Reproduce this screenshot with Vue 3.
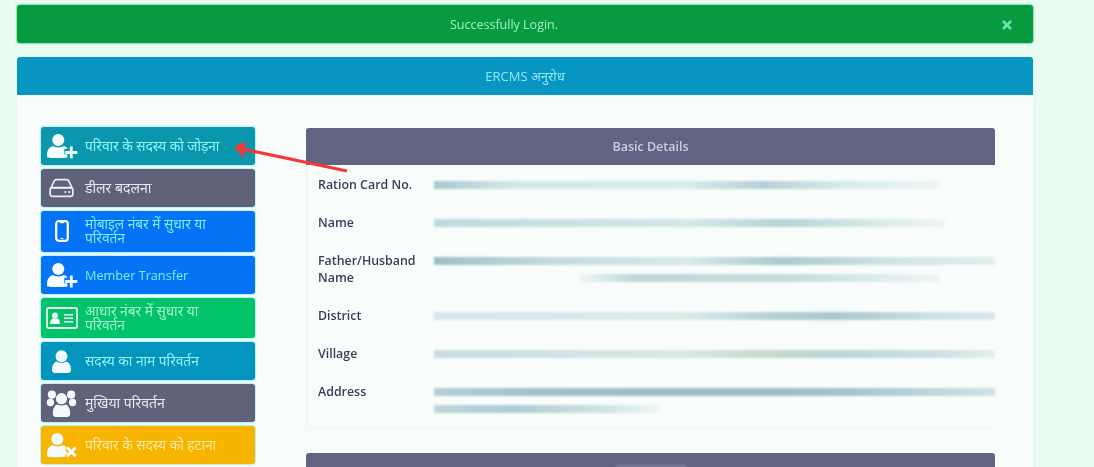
<script setup>
const actions = [
  { label: 'परिवार के सदस्य को जोड़ना', icon: 'userPlus', tone: 'teal', tall: false },
  { label: 'डीलर बदलना', icon: 'drive', tone: 'slate', tall: false, large: true },
  { label: 'मोबाइल नंबर में सुधार या परिवर्तन', icon: 'mobile', tone: 'blue', tall: true },
  { label: 'Member Transfer', icon: 'userPlus', tone: 'blue', tall: false, latin: true },
  { label: 'आधार नंबर में सुधार या परिवर्तन', icon: 'card', tone: 'green', tall: true },
  { label: 'सदस्य का नाम परिवर्तन', icon: 'user', tone: 'sky', tall: false },
  { label: 'मुखिया परिवर्तन', icon: 'users', tone: 'slate', tall: false, large: true },
  { label: 'परिवार के सदस्य को हटाना', icon: 'userX', tone: 'amber', tall: false }
]

const rows = [
  { label: 'Ration Card No.', bars: ['b1'], kind: 'single' },
  { label: 'Name', bars: ['b2'], kind: 'single' },
  { label: 'Father/Husband Name', bars: ['b3', 'b4'], kind: 'double' },
  { label: 'District', bars: ['b5'], kind: 'single' },
  { label: 'Village', bars: ['b6'], kind: 'single' },
  { label: 'Address', bars: ['b7', 'b8'], kind: 'double' }
]
</script>

<template>
  <div class="page">
    <div class="alert">
      <span class="soft">Successfully Login.</span>
      <svg class="close" viewBox="0 0 12 12" aria-hidden="true">
        <path d="M2 2 10 10M10 2 2 10" />
      </svg>
    </div>

    <section class="card">
      <header class="card-head"><span class="soft">ERCMS अनुरोध</span></header>
      <div class="card-body">
        <nav class="actions">
          <a
            v-for="item in actions"
            :key="item.label + item.tone"
            class="action"
            :class="[item.tone, { tall: item.tall, large: item.large, latin: item.latin }]"
          >
            <span class="icon">
              <svg v-if="item.icon === 'userPlus'" viewBox="0 0 34 28" class="ic-wide">
                <circle cx="13" cy="7.500" r="6.500" />
                <path d="M1 26c-1-8 3-11 6-12 3 2 9 2 12 0 2 .6 3.400 1.600 4.300 3h-3.800v6h3.300v3.400C20 27 3 27.500 1 26z" />
                <path d="M25.500 14.500h3v5h5v3h-5v5h-3v-5h-5v-3h5z" />
              </svg>
              <svg v-else-if="item.icon === 'userX'" viewBox="0 0 34 28" class="ic-wide">
                <circle cx="12" cy="7.500" r="6.500" />
                <path d="M1 26c-1-8 3-11 6-12 3 2 8 2 11 0 1.500.5 3 1.500 4 3l-2 2 3 3-3 3 1.500 1.400C17 27.500 3 27.500 1 26z" />
                <path d="m23.500 15.500 3.500 3.500 3.500-3.500 2.300 2.300-3.500 3.500 3.500 3.500-2.300 2.400-3.500-3.500-3.500 3.500-2.300-2.400 3.500-3.500-3.500-3.500z" />
              </svg>
              <svg v-else-if="item.icon === 'drive'" viewBox="0 0 26 20" class="ic-drive">
                <path class="line" d="M2 10 5.500 2.500C6 1.600 6.800 1.200 7.800 1.200h10.400c1 0 1.800.4 2.300 1.300L24 10" />
                <rect class="line" x="1.200" y="9.500" width="23.600" height="9.300" rx="2.500" />
                <path d="M3 9h20v1.500H3z" />
                <circle cx="17" cy="14.200" r="1.100" />
                <circle cx="21" cy="14.200" r="1.100" />
              </svg>
              <svg v-else-if="item.icon === 'mobile'" viewBox="0 0 14 22" class="ic-mobile">
                <rect class="line thick" x="1.200" y="1.200" width="11.600" height="19.600" rx="2.500" />
                <path d="M5 2h4v1.200H5z" />
                <path d="M5.500 18h3v1h-3z" />
              </svg>
              <svg v-else-if="item.icon === 'card'" viewBox="0 0 32 22" class="ic-card">
                <rect class="line" x="1" y="1" width="30" height="20" rx="1.500" />
                <circle cx="9" cy="8.500" r="3" />
                <path d="M4 17c0-4 2-5.500 3-5.500h4c1.300 0 3 1.500 3 5.500z" />
                <path d="M18 7h9v1.500h-9zM18 10.500h9V12h-9zM18 14h9v1.500h-9z" />
              </svg>
              <svg v-else-if="item.icon === 'user'" viewBox="0 0 22 24" class="ic-user">
                <circle cx="11" cy="6.500" r="6.200" />
                <path d="M1 21c0-6 3-8.500 5-9 3 2 7 2 10 0 2 .5 5 3 5 9 0 1.800-1.500 3-3 3H4c-1.500 0-3-1.200-3-3z" />
              </svg>
              <svg v-else viewBox="0 0 32 28" class="ic-users">
                <circle cx="16" cy="9" r="5.800" />
                <circle cx="6" cy="4.800" r="4.200" />
                <circle cx="26" cy="4.800" r="4.200" />
                <circle cx="4.500" cy="13" r="3.800" />
                <circle cx="27.500" cy="13" r="3.800" />
                <path d="M7 25c0-6 2-9 4.500-10 3 1.500 6 1.500 9 0C23 16 25 19 25 25c0 2-1.500 3-3 3H10c-1.500 0-3-1-3-3z" />
              </svg>
            </span>
            <span class="action-text">{{ item.label }}</span>
          </a>
        </nav>

        <div class="panels">
          <div class="panel">
            <h3 class="panel-head"><span class="soft">Basic Details</span></h3>
            <div class="panel-rows">
              <div v-for="row in rows" :key="row.label" class="row" :class="row.kind">
                <div class="row-label">{{ row.label }}</div>
                <div class="row-values">
                  <span v-for="b in row.bars" :key="b" class="bar" :class="b"></span>
                </div>
              </div>
            </div>
          </div>
          <div class="panel-next"><span class="next-title"></span></div>
        </div>
      </div>
    </section>

    <svg class="pointer" viewBox="0 0 1094 467" aria-hidden="true">
      <path d="M347 171 243 149" />
      <path class="tip" d="M234 147 246 141.500 244.500 149 244.500 158.500z" />
    </svg>
  </div>
</template>

<style>
html, body {
  margin: 0;
  height: 467px;
  overflow: hidden;
  background: #e8fbf1;
}
</style>

<style scoped>
.page {
  position: relative;
  box-sizing: border-box;
  width: 1094px;
  height: 467px;
  padding: 5px 61px 0 17px;
  overflow: hidden;
  font-family: "Open Sans", "Noto Sans", "DejaVu Sans", sans-serif;
  color: #3a3d58;
}
.soft {
  filter: blur(0.6px);
  display: inline-block;
}
.alert {
  position: relative;
  display: flex;
  align-items: center;
  justify-content: center;
  box-sizing: border-box;
  height: 38px;
  margin-bottom: 14px;
  padding-right: 42px;
  border-radius: 3px;
  background: #079a3f;
  color: #9df2c4;
  font-size: 12.500px;
  box-shadow: 0 0 0 1px #8cebb8;
}
.close {
  position: absolute;
  right: 20px;
  top: 14px;
  width: 12px;
  height: 12px;
  fill: none;
  stroke: #72e0b0;
  stroke-width: 2.600;
  filter: blur(0.4px);
}
.card {
  height: 420px;
  background: #f8fdfc;
  box-shadow: 0 0 3px #e0f5f0;
}
.card-head {
  display: flex;
  align-items: center;
  justify-content: center;
  height: 38px;
  border-radius: 3px 3px 0 0;
  background: #0795c2;
  color: #8fe9f5;
  font-size: 13px;
}
.card-body {
  display: flex;
  gap: 51px;
  padding: 32px 38px 0 24px;
}
.actions {
  display: flex;
  flex-direction: column;
  gap: 4px;
  flex: 0 0 214px;
}
.action {
  display: flex;
  align-items: center;
  box-sizing: border-box;
  height: 38px;
  border-radius: 3px;
  font-size: 13.700px;
  line-height: 14px;
  box-shadow: 0 0 1px 1px rgba(120, 235, 240, 0.55);
}
.action.tall {
  height: 40.500px;
}
.action.large .action-text {
  font-size: 14px;
}
.action.latin .action-text {
  font-size: 12.700px;
}
.action-text {
  flex: 1;
  padding-right: 24px;
  filter: blur(0.5px);
}
.icon {
  flex: 0 0 41px;
  margin-right: 3px;
  display: flex;
  align-items: center;
  justify-content: center;
}
.icon svg {
  fill: #f3fbff;
}
.line {
  fill: none;
  stroke: #e6eef5;
  stroke-width: 1.800;
}
.line.thick {
  stroke-width: 2.200;
  stroke: #fff;
}
.ic-wide {
  width: 32px;
  height: 26px;
}
.ic-drive {
  width: 25px;
  height: 20px;
}
.ic-mobile {
  width: 14px;
  height: 22px;
}
.ic-card {
  width: 32px;
  height: 22px;
}
.ic-user {
  width: 21px;
  height: 23px;
}
.ic-users {
  width: 31px;
  height: 27px;
}
.teal { background: #0a97ae; color: #8ff6f6; }
.slate { background: #5f6278; color: #e4e9ef; }
.blue { background: #0473f5; color: #7eecff; }
.green { background: #03c368; color: #a0f7cf; }
.sky { background: #0495bf; color: #95f0f8; }
.amber { background: #f8b500; color: #ffe9a6; }

.panels {
  flex: 1;
  min-width: 0;
  padding-top: 1px;
}
.panel {
  border-left: 1px solid #e8f3f3;
  border-bottom: 1px solid #eef6f6;
}
.panel-head {
  display: flex;
  align-items: center;
  justify-content: center;
  height: 37px;
  margin: 0 0 0 -1px;
  border-radius: 3px 3px 0 0;
  background: #5f6482;
  color: #c6d2e2;
  font-size: 12.500px;
  font-weight: 600;
}
.panel-rows {
  display: flex;
  flex-direction: column;
  height: 262px;
}
.row {
  display: flex;
  box-sizing: border-box;
  height: 38px;
  padding: 11px 0 0 11px;
  border-bottom: 1px solid #f4faf9;
}
.row:last-child {
  border-bottom: 0;
}
.row.double {
  height: 55px;
}
.row-label {
  flex: 0 0 116px;
  font-size: 12.400px;
  font-weight: 600;
  line-height: 17px;
  color: #3b3e5a;
  filter: blur(0.4px);
}
.row-values {
  flex: 1;
  display: flex;
  flex-direction: column;
  gap: 9px;
  padding-top: 5px;
}
.bar {
  display: block;
  height: 8px;
  filter: blur(1.200px);
}
.b1 {
  width: 506px;
  background: linear-gradient(90deg, #a7c8cc, #d5e8e9 16%, #d9ecec 50%, #b4d0d4 65%, #d8eaea 80%, #eef7f6);
}
.b2 {
  width: 511px;
  background: linear-gradient(90deg, #bfd9dc, #d6e8e8 50%, #b6d3d5 68%, #d7e8e8 85%, #eef7f6);
}
.b3 {
  width: 561px;
  background: linear-gradient(90deg, #9fbfc5, #c4dcdd 22%, #d9eaea 45%, #a9c9cc 62%, #cfe3e3 80%, #e2f0ef);
}
.b4 {
  width: 360px;
  margin-left: 146px;
  background: linear-gradient(90deg, #eef7f6, #bed8da 15%, #c5dddd 60%, #eef7f6);
}
.b5 {
  width: 561px;
  background: linear-gradient(90deg, #d6e8e9, #dcebea 45%, #b5d1d4 60%, #a9c8ce 72%, #cfe3e4 90%, #d8e9e9);
}
.b6 {
  width: 561px;
  background: linear-gradient(90deg, #c7dedf, #d6e9e6 45%, #c6dcc9 58%, #bcd5d6 72%, #cfe3e3 92%, #e3f0ef);
}
.b7 {
  width: 561px;
  background: linear-gradient(90deg, #b5d0d4, #a0c0c6 20%, #9cbcc3 60%, #a6c6cc 75%, #cfe3e4);
}
.b8 {
  width: 226px;
  background: linear-gradient(90deg, #bcd6d9, #afcdd1 35%, #cfe3e3 75%, #f0f8f7);
}
.panel-next {
  display: flex;
  justify-content: center;
  box-sizing: border-box;
  height: 37px;
  margin-top: 25px;
  padding-top: 12px;
  border-radius: 3px 3px 0 0;
  background: #5f6482;
}
.next-title {
  display: block;
  width: 70px;
  height: 3px;
  background: #a9b4c8;
  filter: blur(1.200px);
  opacity: 0.35;
}
.pointer {
  position: absolute;
  inset: 0;
  width: 1094px;
  height: 467px;
  pointer-events: none;
}
.pointer path {
  fill: none;
  stroke: #f5373c;
  stroke-width: 3.200;
}
.pointer .tip {
  fill: #f5373c;
  stroke: none;
}
</style>
